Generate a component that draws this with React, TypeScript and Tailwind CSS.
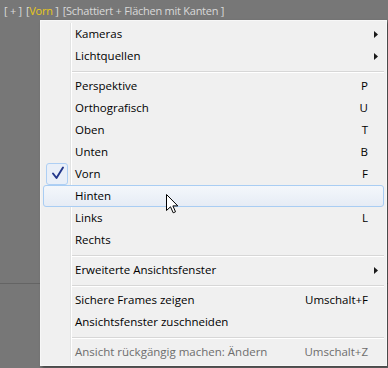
import React from "react";

type Item =
  | { kind: "sep" }
  | {
      kind: "item";
      label: string;
      shortcut?: string;
      submenu?: boolean;
      checked?: boolean;
      hover?: boolean;
      disabled?: boolean;
    };

const items: Item[] = [
  { kind: "item", label: "Kameras", submenu: true },
  { kind: "item", label: "Lichtquellen", submenu: true },
  { kind: "sep" },
  { kind: "item", label: "Perspektive", shortcut: "P" },
  { kind: "item", label: "Orthografisch", shortcut: "U" },
  { kind: "item", label: "Oben", shortcut: "T" },
  { kind: "item", label: "Unten", shortcut: "B" },
  { kind: "item", label: "Vorn", shortcut: "F", checked: true },
  { kind: "item", label: "Hinten", hover: true },
  { kind: "item", label: "Links", shortcut: "L" },
  { kind: "item", label: "Rechts" },
  { kind: "sep" },
  { kind: "item", label: "Erweiterte Ansichtsfenster", submenu: true },
  { kind: "sep" },
  { kind: "item", label: "Sichere Frames zeigen", shortcut: "Umschalt+F" },
  { kind: "item", label: "Ansichtsfenster zuschneiden" },
  { kind: "sep" },
  { kind: "item", label: "Ansicht rückgängig machen: Ändern", shortcut: "Umschalt+Z", disabled: true },
];

function Arrow() {
  return (
    <svg width="4" height="7" viewBox="0 0 4 7" className="block">
      <path d="M0 0 L4 3.5 L0 7 Z" fill="#1a1a1a" />
    </svg>
  );
}

function Check() {
  return (
    <svg width="20" height="20" viewBox="0 0 20 20" className="block">
      <path d="M6 9.5 L9.5 14 L16 3.5" fill="none" stroke="#22368a" strokeWidth="1.9" strokeLinecap="round" strokeLinejoin="round" />
    </svg>
  );
}

function Row({ it }: { it: Extract<Item, { kind: "item" }> }) {
  const rowCls = it.hover
    ? "flex h-[22px] items-center rounded-[3px] border border-[#a9cdf3] bg-gradient-to-b from-[#f4f7fb] to-[#e6ecf5]"
    : "flex h-[22px] items-center border border-transparent";
  return (
    <div className={rowCls}>
      <div
        className={
          "flex h-full w-[27px] shrink-0 items-center justify-center " +
          (it.hover ? "" : "-ml-px")
        }
      >
        {it.checked && (
          <div className="-my-px flex h-[22px] w-[22px] items-center justify-center rounded-[3px] border border-[#aecff4] bg-[#e9eff8]">
            <Check />
          </div>
        )}
      </div>
      <div
        className={
          "flex h-[22px] flex-1 items-center pl-[4px] " +
          (it.hover ? "" : "border-l border-l-[#e2e3e3] shadow-[inset_1px_0_0_#ffffff]")
        }
      >
        <span className={"flex-1 " + (it.disabled ? "text-[#6d6d6d]" : "text-black")}>{it.label}</span>
        {it.shortcut && (
          <span className={it.disabled ? "text-[#6d6d6d]" : "text-black"}>{it.shortcut}</span>
        )}
        <div className="flex w-[15px] justify-end pr-[5px]">{it.submenu && <Arrow />}</div>
      </div>
    </div>
  );
}

function Sep() {
  return (
    <div className="flex h-[8px]">
      <div className="w-[27px] shrink-0" />
      <div className="flex flex-1 flex-col border-l border-l-[#e2e3e3] shadow-[inset_1px_0_0_#ffffff]">
        <div className="h-[4px]" />
        <div className="ml-[1px] h-px bg-[#d7d7d7]" />
        <div className="ml-[1px] h-px bg-white" />
      </div>
    </div>
  );
}

export default function App() {
  return (
    <div
      className="relative h-[368px] w-[388px] overflow-hidden bg-[#777777] text-[11.5px]"
      style={{ fontFamily: '"Open Sans", "Noto Sans", sans-serif' }}
    >
      <div className="flex h-[283px] flex-col">
        <div className="flex gap-[4px] pl-[4px] pt-[3px] text-[11px] leading-[16px] tracking-[-0.25px] text-[#d9d9d9]">
          <span>[ + ]</span>
          <span>
            [<span className="text-[#e8c81a]">Vorn</span> ]
          </span>
          <span>[Schattiert + Flächen mit Kanten ]</span>
        </div>
      </div>
      <div className="h-px bg-[#646464]" />

      <div className="absolute left-[40px] top-[20px] w-[347px] border border-[#f7f7f7] bg-[#f0f0f0] p-[2px] shadow-[2px_2px_3px_rgba(0,0,0,0.45)]">
        <div className="flex flex-col">
          {items.map((it, i) => (it.kind === "sep" ? <Sep key={i} /> : <Row key={i} it={it} />))}
        </div>
      </div>

      <svg
        className="absolute left-[166px] top-[194px]"
        width="13"
        height="20"
        viewBox="0 0 13 20"
      >
        <path
          d="M0.5 0.5 L0.5 16.5 L4.5 12.8 L7.2 18.8 L9.5 17.8 L6.9 11.9 L11.8 11.9 Z"
          fill="#ffffff"
          stroke="#000000"
          strokeWidth="1"
          strokeLinejoin="miter"
        />
      </svg>
    </div>
  );
}
